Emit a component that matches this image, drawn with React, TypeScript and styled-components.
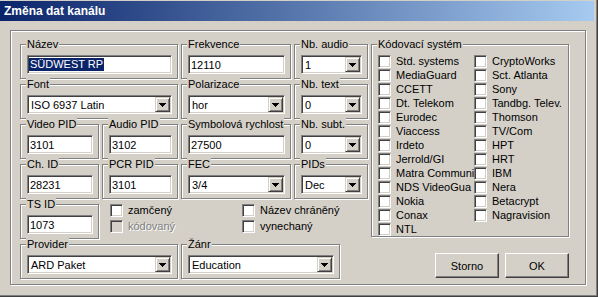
import React from "react";
import styled, { createGlobalStyle } from "styled-components";

const GlobalStyle = createGlobalStyle`
  html, body {
    margin: 0;
    padding: 0;
    background: #d4d0c8;
  }
  body {
    font-family: "Liberation Sans", Arial, sans-serif;
    font-size: 11px;
    color: #000;
  }
`;

const Window = styled.div`
  width: 598px;
  height: 297px;
  box-sizing: border-box;
  background: #d4d0c8;
  padding-top: 1px;
  border-right: 1px solid #404040;
  border-bottom: 1px solid #404040;
  box-shadow: inset -1px -1px 0 #808080;
  display: flex;
  flex-direction: column;
`;

const TitleBar = styled.div`
  height: 20px;
  margin-right: 3px;
  padding-left: 4px;
  display: flex;
  align-items: center;
  background: linear-gradient(to right, #0a246a, #a6caf0);
  color: #fff;
  font-weight: bold;
  font-size: 12px;
`;

const Body = styled.div`
  flex: 1;
  padding: 9px 0 0 10px;
`;

const Panel = styled.div`
  width: 576px;
  height: 255px;
  box-sizing: border-box;
  border: 1px solid #808080;
  box-shadow: inset 1px 1px 0 #fff, 1px 1px 0 #fff;
  padding: 13px 0 0 9px;
  display: flex;
  gap: 3px;
`;

const LeftCol = styled.div`
  width: 348px;
  display: flex;
  flex-direction: column;
  gap: 5px;
`;

const RightCol = styled.div`
  width: 198px;
  display: flex;
  flex-direction: column;
`;

const Row = styled.div`
  display: flex;
  gap: 3px;
  align-items: flex-start;
`;

const Group = styled.div<{ $w: number; $h?: number }>`
  width: ${({ $w }) => $w}px;
  height: ${({ $h }) => $h ?? 35}px;
  box-sizing: border-box;
  border: 1px solid #808080;
  box-shadow: inset 1px 1px 0 #fff, 1px 1px 0 #fff;
  padding: 0 5px 4px 6px;
  display: flex;
  flex-direction: column;
`;

const Caption = styled.span`
  align-self: flex-start;
  margin: -7px 0 0 -1px;
  padding: 0 1px;
  height: 13px;
  line-height: 13px;
  background: #d4d0c8;
  white-space: nowrap;
`;

const Edit = styled.div`
  margin-top: 4px;
  height: 19px;
  box-sizing: border-box;
  background: #fff;
  border: 1px solid;
  border-color: #808080 #fff #fff #808080;
  box-shadow: inset 1px 1px 0 #404040, inset -1px -1px 0 #d4d0c8;
  padding: 1px 1px 1px 2px;
  display: flex;
  align-items: center;
  white-space: nowrap;
  overflow: hidden;
`;

const Selected = styled.span`
  display: inline-block;
  margin-left: -1px;
  padding: 0 1px;
  line-height: 13px;
  background: #0a246a;
  color: #fff;
`;

const Combo = styled(Edit)`
  padding: 1px;
`;

const ComboText = styled.span`
  flex: 1;
  padding-left: 2px;
  overflow: hidden;
`;

const DropButton = styled.div`
  width: 15px;
  height: 15px;
  box-sizing: border-box;
  background: #d4d0c8;
  border: 1px solid;
  border-color: #d4d0c8 #404040 #404040 #d4d0c8;
  box-shadow: inset 1px 1px 0 #fff, inset -1px -1px 0 #808080;
  display: flex;
  align-items: center;
  justify-content: center;
`;

const CheckRow = styled.div<{ $h?: number }>`
  height: ${({ $h }) => $h ?? 14}px;
  display: flex;
  align-items: flex-start;
  gap: 5px;
  white-space: nowrap;
`;

const Box = styled.div<{ $disabled?: boolean }>`
  flex: none;
  width: 13px;
  height: 13px;
  box-sizing: border-box;
  background: ${({ $disabled }) => ($disabled ? "#d4d0c8" : "#fff")};
  border: 1px solid;
  border-color: #808080 #fff #fff #808080;
  box-shadow: inset 1px 1px 0 #404040, inset -1px -1px 0 #d4d0c8;
`;

const CheckLabel = styled.span<{ $disabled?: boolean }>`
  line-height: 13px;
  color: ${({ $disabled }) => ($disabled ? "#808080" : "#000")};
  text-shadow: ${({ $disabled }) => ($disabled ? "1px 1px 0 #fff" : "none")};
`;

const Checks = styled.div`
  display: flex;
  padding-left: 8px;
`;

const CheckCol = styled.div<{ $w?: number }>`
  width: ${({ $w }) => ($w ? `${$w}px` : "auto")};
  display: flex;
  flex-direction: column;
`;

const CodeList = styled.div`
  margin-top: 4px;
  display: flex;
`;

const ButtonRow = styled.div`
  margin-top: 16px;
  display: flex;
  justify-content: flex-end;
  gap: 6px;
`;

const Button = styled.div`
  width: 64px;
  height: 25px;
  box-sizing: border-box;
  background: #d4d0c8;
  border: 1px solid;
  border-color: #fff #404040 #404040 #fff;
  box-shadow: inset -1px -1px 0 #808080, inset 1px 1px 0 #d4d0c8;
  display: flex;
  align-items: center;
  justify-content: center;
`;

// the dialog shows these two names cut short by the column width
const codesLeft = [
  "Std. systems",
  "MediaGuard",
  "CCETT",
  "Dt. Telekom",
  "Eurodec",
  "Viaccess",
  "Irdeto",
  "Jerrold/GI",
  "Matra Communi",
  "NDS VideoGua",
  "Nokia",
  "Conax",
  "NTL",
];

const codesRight = [
  "CryptoWorks",
  "Sct. Atlanta",
  "Sony",
  "Tandbg. Telev.",
  "Thomson",
  "TV/Com",
  "HPT",
  "HRT",
  "IBM",
  "Nera",
  "Betacrypt",
  "Nagravision",
];

function Arrow() {
  return (
    <svg width="7" height="4" viewBox="0 0 7 4">
      <path d="M0 0h7v1H0zM1 1h5v1H1zM2 2h3v1H2zM3 3h1v1H3z" fill="#000" />
    </svg>
  );
}

interface FieldProps {
  label: string;
  value: React.ReactNode;
  w: number;
}

function EditField({ label, value, w }: FieldProps) {
  return (
    <Group $w={w}>
      <Caption>{label}</Caption>
      <Edit>{value}</Edit>
    </Group>
  );
}

function ComboField({ label, value, w }: FieldProps) {
  return (
    <Group $w={w}>
      <Caption>{label}</Caption>
      <Combo>
        <ComboText>{value}</ComboText>
        <DropButton>
          <Arrow />
        </DropButton>
      </Combo>
    </Group>
  );
}

interface CheckProps {
  label: string;
  disabled?: boolean;
  h?: number;
}

function Check({ label, disabled, h }: CheckProps) {
  return (
    <CheckRow $h={h}>
      <Box $disabled={disabled} />
      <CheckLabel $disabled={disabled}>{label}</CheckLabel>
    </CheckRow>
  );
}

export default function App() {
  return (
    <>
      <GlobalStyle />
      <Window>
        <TitleBar>Změna dat kanálu</TitleBar>
        <Body>
          <Panel>
            <LeftCol>
              <Row>
                <EditField
                  label="Název"
                  w={158}
                  value={<Selected>SÜDWEST RP</Selected>}
                />
                <EditField label="Frekvence" w={110} value="12110" />
                <ComboField label="Nb. audio" w={74} value="1" />
              </Row>
              <Row>
                <ComboField label="Font" w={158} value="ISO 6937 Latin" />
                <ComboField label="Polarizace" w={110} value="hor" />
                <ComboField label="Nb. text" w={74} value="0" />
              </Row>
              <Row>
                <EditField label="Video PID" w={79} value="3101" />
                <EditField label="Audio PID" w={76} value="3102" />
                <EditField label="Symbolová rychlost" w={110} value="27500" />
                <ComboField label="Nb. subt." w={74} value="0" />
              </Row>
              <Row>
                <EditField label="Ch. ID" w={79} value="28231" />
                <EditField label="PCR PID" w={76} value="3101" />
                <ComboField label="FEC" w={110} value="3/4" />
                <ComboField label="PIDs" w={74} value="Dec" />
              </Row>
              <Row>
                <EditField label="TS ID" w={79} value="1073" />
                <Checks>
                  <CheckCol $w={132}>
                    <Check label="zamčený" h={16} />
                    <Check label="kódovaný" h={16} disabled />
                  </CheckCol>
                  <CheckCol>
                    <Check label="Název chráněný" h={16} />
                    <Check label="vynechaný" h={16} />
                  </CheckCol>
                </Checks>
              </Row>
              <Row>
                <ComboField label="Provider" w={158} value="ARD Paket" />
                <ComboField label="Žánr" w={159} value="Education" />
              </Row>
            </LeftCol>
            <RightCol>
              <Group $w={198} $h={193}>
                <Caption>Kódovací systém</Caption>
                <CodeList>
                  <CheckCol $w={96}>
                    {codesLeft.map((item) => (
                      <Check key={item} label={item} />
                    ))}
                  </CheckCol>
                  <CheckCol>
                    {codesRight.map((item) => (
                      <Check key={item} label={item} />
                    ))}
                  </CheckCol>
                </CodeList>
              </Group>
              <ButtonRow>
                <Button>Storno</Button>
                <Button>OK</Button>
              </ButtonRow>
            </RightCol>
          </Panel>
        </Body>
      </Window>
    </>
  );
}
